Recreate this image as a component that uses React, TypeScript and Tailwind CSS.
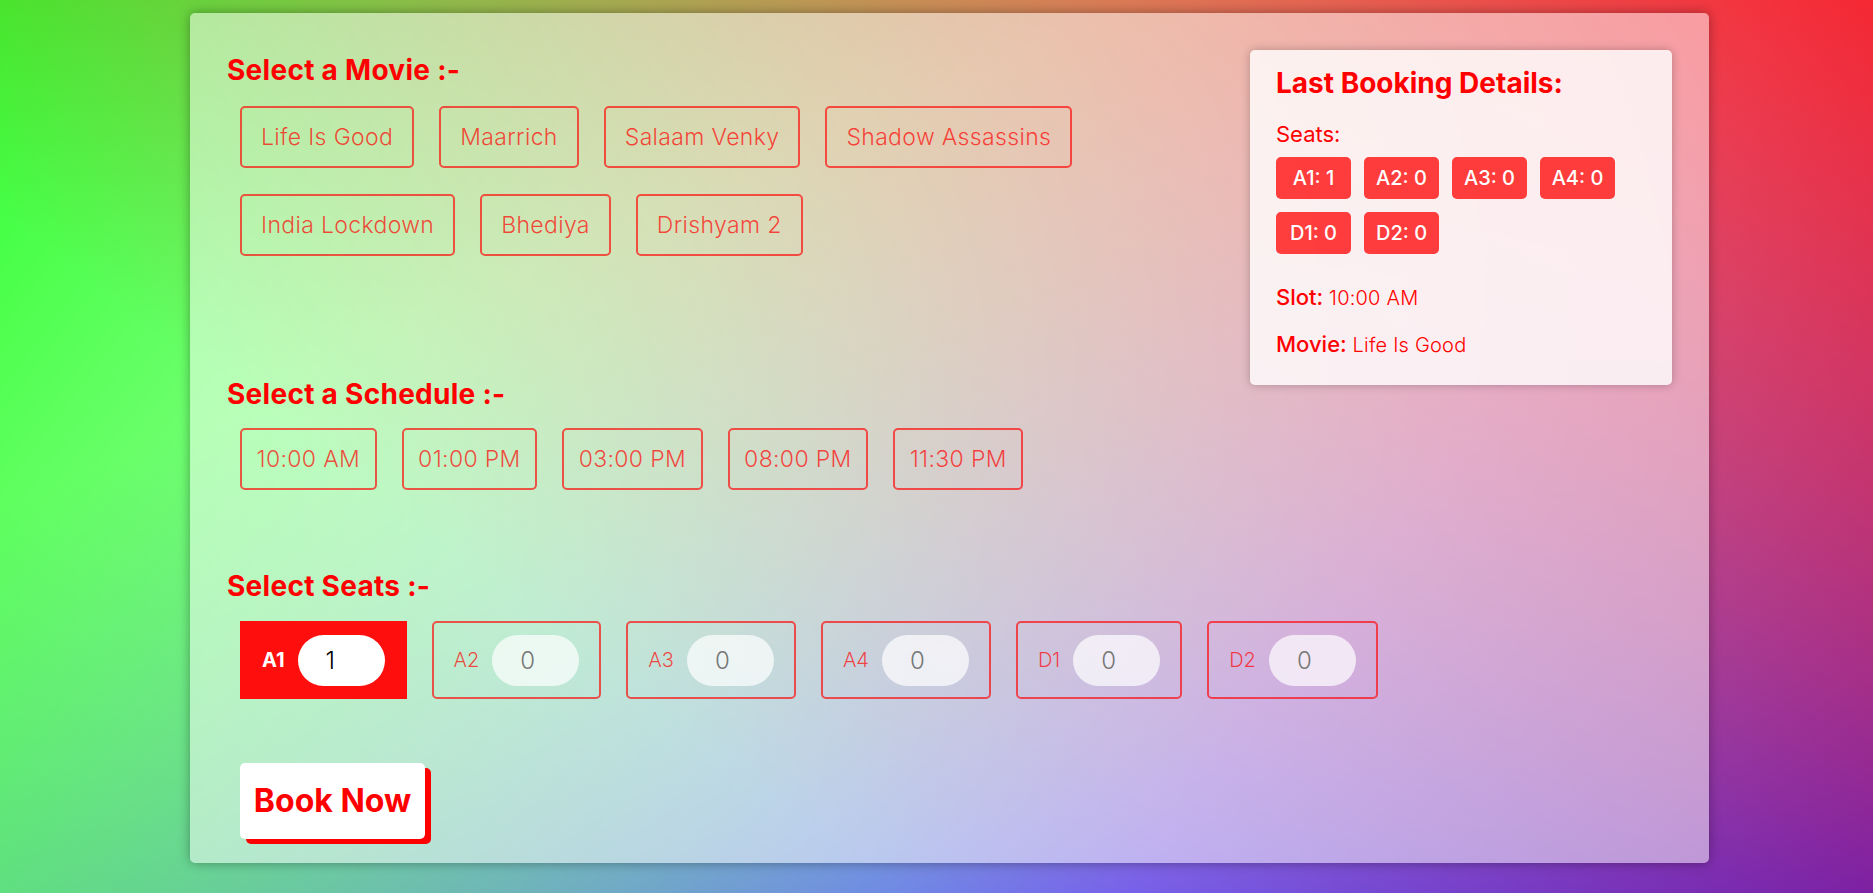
import { useState } from 'react'

// Movie booking page: movie / slot / seat pickers and last booking summary

const movies = ['Life Is Good', 'Maarrich', 'Salaam Venky', 'Shadow Assassins', 'India Lockdown', 'Bhediya', 'Drishyam 2']
const slots = ['10:00 AM', '01:00 PM', '03:00 PM', '08:00 PM', '11:30 PM']
const seatNames = ['A1', 'A2', 'A3', 'A4', 'D1', 'D2']

const lastBooking = {
  seats: { A1: 1, A2: 0, A3: 0, A4: 0, D1: 0, D2: 0 } as Record<string, number>,
  slot: '10:00 AM',
  movie: 'Life Is Good',
}

function Heading({ children, className = '' }: { children: React.ReactNode; className?: string }) {
  return <h2 className={`text-[28px] leading-[40px] font-bold tracking-[0.01em] text-[#ff0000] ${className}`}>{children}</h2>
}

function LastBooking() {
  return (
    <div className="float-right w-[422px] h-[335px] rounded-[5px] bg-white/80 px-[26px] pt-[15px] shadow-[0_0_10px_rgba(0,0,0,0.25)]">
      <h3 className="text-[28px] leading-[36px] font-bold text-[#ff0000]">Last Booking Details:</h3>
      <p className="mt-[18px] text-[22px] leading-[30px] text-[#ff0000]">Seats:</p>
      <div className="mt-[8px] flex flex-wrap gap-[13px] w-[360px]">
        {seatNames.map((s) => (
          <div
            key={s}
            className="flex h-[42px] w-[75px] items-center justify-center rounded-[5px] bg-[rgba(255,0,0,0.75)] text-[20px] font-medium text-white"
          >
            {s}: {lastBooking.seats[s]}
          </div>
        ))}
      </div>
      <p className="mt-[28px] text-[22px] leading-[30px] font-medium text-[#ff0000]">
        Slot: <span className="text-[20px] font-light tracking-[0.01em]">{lastBooking.slot}</span>
      </p>
      <p className="mt-[16px] text-[22px] leading-[30px] font-medium text-[#ff0000]">
        Movie: <span className="text-[20px] font-light tracking-[0.01em]">{lastBooking.movie}</span>
      </p>
    </div>
  )
}

export default function App() {
  const [movie, setMovie] = useState<string | null>(null)
  const [slot, setSlot] = useState<string | null>(null)
  const [seats, setSeats] = useState<Record<string, number>>({ A1: 1, A2: 0, A3: 0, A4: 0, D1: 0, D2: 0 })
  const [activeSeat, setActiveSeat] = useState('A1')

  return (
    <div className="h-[893px] w-full overflow-hidden bg-white bg-[linear-gradient(217deg,rgba(255,0,0,.8),rgba(255,0,0,0)_70.71%),linear-gradient(127deg,rgba(0,255,0,.8),rgba(0,255,0,0)_70.71%),linear-gradient(336deg,rgba(0,0,255,.8),rgba(0,0,255,0)_70.71%)] pl-[190px] pt-[13px] font-['Inter','Noto_Sans',sans-serif]">
      <div className="h-[850px] w-[1519px] rounded-[5px] bg-white/50 p-[37px] shadow-[0_0_12px_rgba(0,0,0,0.35)]">
        <LastBooking />

        {/* Movie */}
        <Heading>Select a Movie :-</Heading>
        <div className="ml-[13px] mt-[16px] flex flex-wrap gap-x-[25px] gap-y-[26px] pr-[30px]">
          {movies.map((m) => (
            <button
              key={m}
              onClick={() => setMovie(m)}
              className={`h-[62px] rounded-[5px] border-2 px-[19px] text-[23px] font-light tracking-[0.015em] ${
                movie === m ? 'border-[#ff0000] bg-[#ff0000] text-white' : 'border-[rgba(255,0,0,0.65)] text-[rgba(255,0,0,0.7)]'
              }`}
            >
              {m}
            </button>
          ))}
        </div>

        {/* Schedule */}
        <Heading className="mt-[118px]">Select a Schedule :-</Heading>
        <div className="ml-[13px] mt-[14px] flex flex-wrap gap-x-[25px] gap-y-[26px]">
          {slots.map((s) => (
            <button
              key={s}
              onClick={() => setSlot(s)}
              className={`h-[62px] rounded-[5px] border-2 px-[14.5px] text-[23px] font-light tracking-[0.015em] ${
                slot === s ? 'border-[#ff0000] bg-[#ff0000] text-white' : 'border-[rgba(255,0,0,0.65)] text-[rgba(255,0,0,0.7)]'
              }`}
            >
              {s}
            </button>
          ))}
        </div>

        {/* Seats */}
        <Heading className="mt-[76px]">Select Seats :-</Heading>
        <div className="ml-[13px] mt-[15px] flex gap-x-[25px]">
          {seatNames.map((s) => {
            const active = activeSeat === s
            return (
              <div
                key={s}
                onClick={() => setActiveSeat(s)}
                className={`flex h-[78px] items-center gap-[13px] border-2 px-[20px] ${
                  active ? 'border-[#ff0e0e] bg-[#ff0e0e]' : 'rounded-[5px] border-[rgba(255,0,0,0.65)]'
                }`}
              >
                <span className={`text-[20px] ${active ? 'font-bold text-white' : 'font-light text-[rgba(255,0,0,0.7)]'}`}>{s}</span>
                <input
                  type="text"
                  value={seats[s]}
                  onChange={(e) => setSeats({ ...seats, [s]: Number(e.target.value) || 0 })}
                  className={`h-[51px] w-[87px] rounded-full pl-[28px] text-[24px] font-light outline-none ${
                    active ? 'bg-white text-black' : 'bg-white/70 text-[#777]'
                  }`}
                />
              </div>
            )
          })}
        </div>

        <button className="ml-[13px] mt-[64px] h-[76px] w-[185px] rounded-[5px] bg-white text-[32px] font-bold text-[#ff0000] shadow-[6px_5px_0_#ff0000]">
          Book Now
        </button>
      </div>
    </div>
  )
}
